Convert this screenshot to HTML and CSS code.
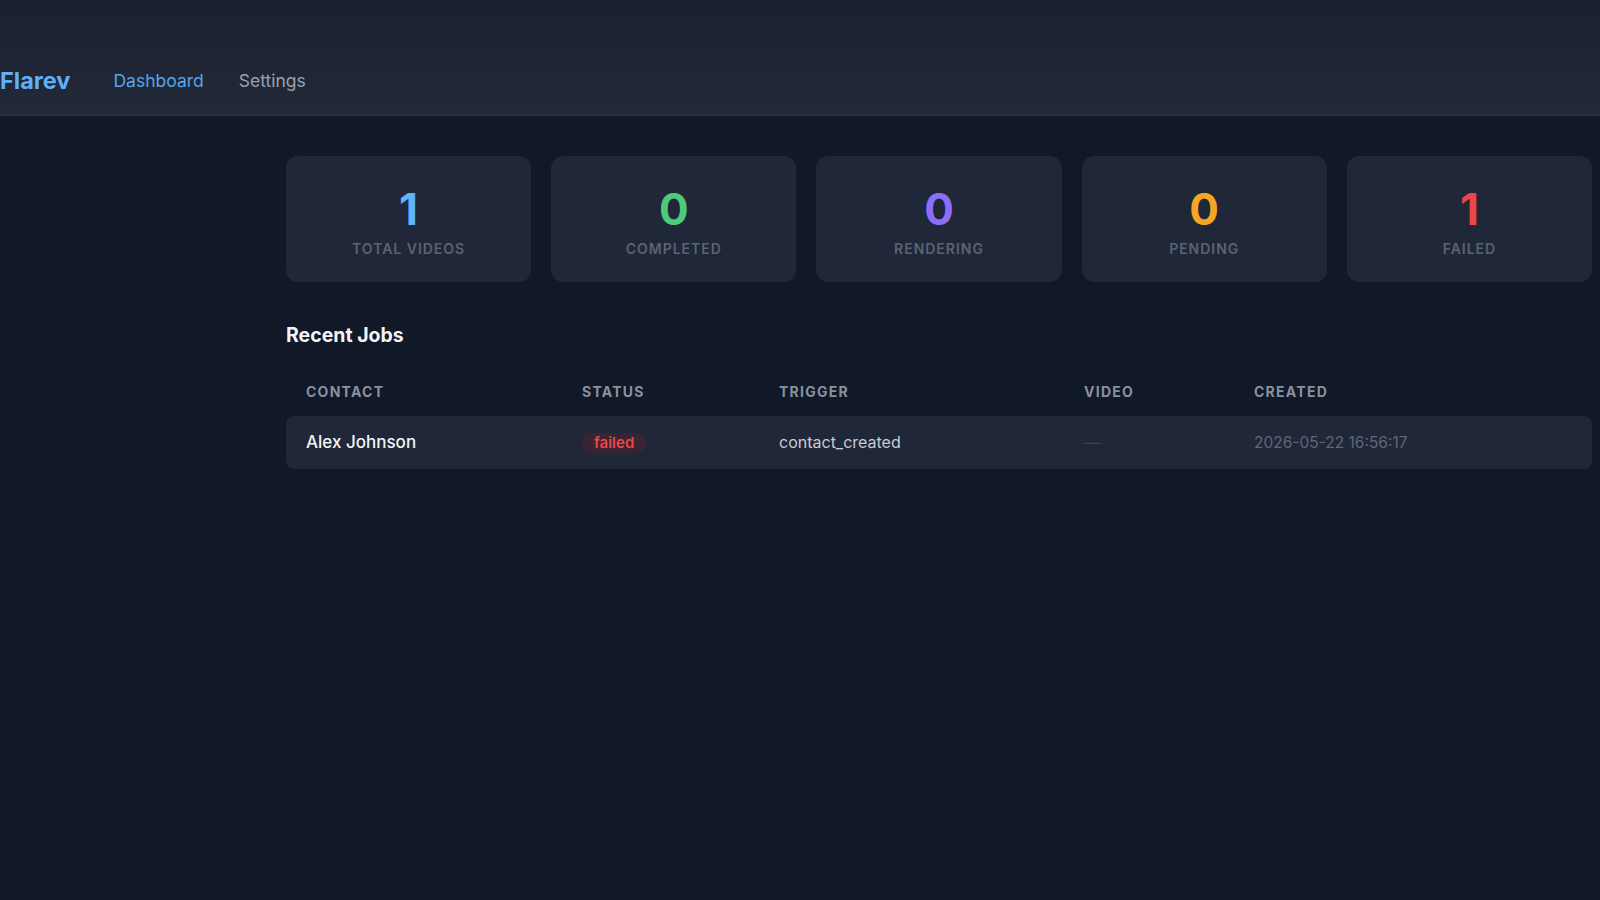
FILE: index.html
```html
<!DOCTYPE html>
<html lang="en">
<head>
    <meta charset="UTF-8">
    <meta name="viewport" content="width=device-width, initial-scale=1.0">
    <title>Flarev - Dashboard</title>
    <link rel="stylesheet" href="styles.css">
</head>
<body>
    <header class="topbar">
        <div class="logo">Flarev</div>
        <nav class="nav">
            <a class="nav-link active" href="#">Dashboard</a>
            <a class="nav-link" href="#">Settings</a>
        </nav>
    </header>

    <main class="main">
        <!-- stats -->
        <section class="stats">
            <div class="stat">
                <div class="stat-value blue">1</div>
                <div class="stat-label">Total Videos</div>
            </div>
            <div class="stat">
                <div class="stat-value green">0</div>
                <div class="stat-label">Completed</div>
            </div>
            <div class="stat">
                <div class="stat-value purple">0</div>
                <div class="stat-label">Rendering</div>
            </div>
            <div class="stat">
                <div class="stat-value orange">0</div>
                <div class="stat-label">Pending</div>
            </div>
            <div class="stat">
                <div class="stat-value red">1</div>
                <div class="stat-label">Failed</div>
            </div>
        </section>

        <h2 class="section-title">Recent Jobs</h2>

        <table class="jobs">
            <colgroup>
                <col class="col-contact">
                <col class="col-status">
                <col class="col-trigger">
                <col class="col-video">
                <col>
            </colgroup>
            <thead>
                <tr>
                    <th>Contact</th>
                    <th>Status</th>
                    <th>Trigger</th>
                    <th>Video</th>
                    <th>Created</th>
                </tr>
            </thead>
            <tbody>
                <tr>
                    <td class="contact">Alex Johnson</td>
                    <td><span class="badge badge-failed">failed</span></td>
                    <td class="trigger">contact_created</td>
                    <td class="muted">—</td>
                    <td class="date">2026-05-22 16:56:17</td>
                </tr>
            </tbody>
        </table>
    </main>
</body>
</html>
```

FILE: styles.css
```css
/* base */
body {
    margin: 0;
    min-height: 100vh;
    background-color: #111827;
    color: #e5e7eb;
    font-family: Inter, "Liberation Sans", Arial, sans-serif;
}

/* header */
.topbar {
    display: flex;
    align-items: center;
    padding: 67px 0 20px;
    background: linear-gradient(#1b2030, #222939);
    border-bottom: 1px solid #2b3244;
}
.logo {
    font-size: 23.5px;
    font-weight: 700;
    line-height: 28px;
    color: #5fb0f6;
}
.nav {
    display: flex;
    gap: 35px;
    margin-left: 43px;
}
.nav-link {
    font-size: 17.5px;
    line-height: 28px;
    color: #9aa1ad;
    text-decoration: none;
}
.nav-link.active {
    color: #55a6ea;
}

/* content */
.main {
    margin: 0 8px 0 286px;
    padding-top: 40px;
}

.stats {
    display: grid;
    grid-template-columns: repeat(5, 1fr);
    gap: 20px;
}
.stat {
    padding: 31px 16px 23px;
    background-color: #1f2738;
    border-radius: 12px;
    text-align: center;
}
.stat-value {
    font-size: 44px;
    font-weight: 700;
    line-height: 1;
}
.stat-label {
    margin-top: 8px;
    font-size: 14px;
    font-weight: 600;
    line-height: 20px;
    letter-spacing: 0.07em;
    text-transform: uppercase;
    color: #5b6372;
}
.blue { color: #5fb4f8; }
.green { color: #4fc97c; }
.purple { color: #8d6ef6; }
.orange { color: #f5a623; }
.red { color: #e9474a; }

.section-title {
    margin: 39px 0 24px;
    font-size: 19.5px;
    font-weight: 700;
    line-height: 28px;
    color: #f3f4f6;
}

/* jobs table */
.jobs {
    width: 100%;
    table-layout: fixed;
    border-collapse: separate;
    border-spacing: 0;
}
.col-contact { width: 276px; }
.col-status { width: 197px; }
.col-trigger { width: 305px; }
.col-video { width: 170px; }

.jobs th {
    padding: 11px 20px 16px;
    font-size: 14px;
    font-weight: 700;
    line-height: 16px;
    letter-spacing: 0.09em;
    text-align: left;
    text-transform: uppercase;
    color: #8a919e;
}
.jobs td {
    padding: 16px 20px;
    font-size: 16px;
    line-height: 21px;
    background-color: #1f2738;
}
.jobs td:first-child {
    border-radius: 8px 0 0 8px;
}
.jobs td:last-child {
    border-radius: 0 8px 8px 0;
}
.jobs .contact {
    font-size: 17px;
    font-weight: 500;
    color: #f3f4f6;
}
.trigger {
    color: #c9ccd3;
}
.muted {
    color: #3f4756;
}
.jobs .date {
    font-size: 15.5px;
    color: #5f6776;
}

.badge {
    display: inline-block;
    padding: 0 12px;
    border-radius: 999px;
    font-size: 15px;
    font-weight: 600;
    line-height: 20px;
}
.badge-failed {
    background-color: #3a2432;
    color: #ef4444;
}
```
